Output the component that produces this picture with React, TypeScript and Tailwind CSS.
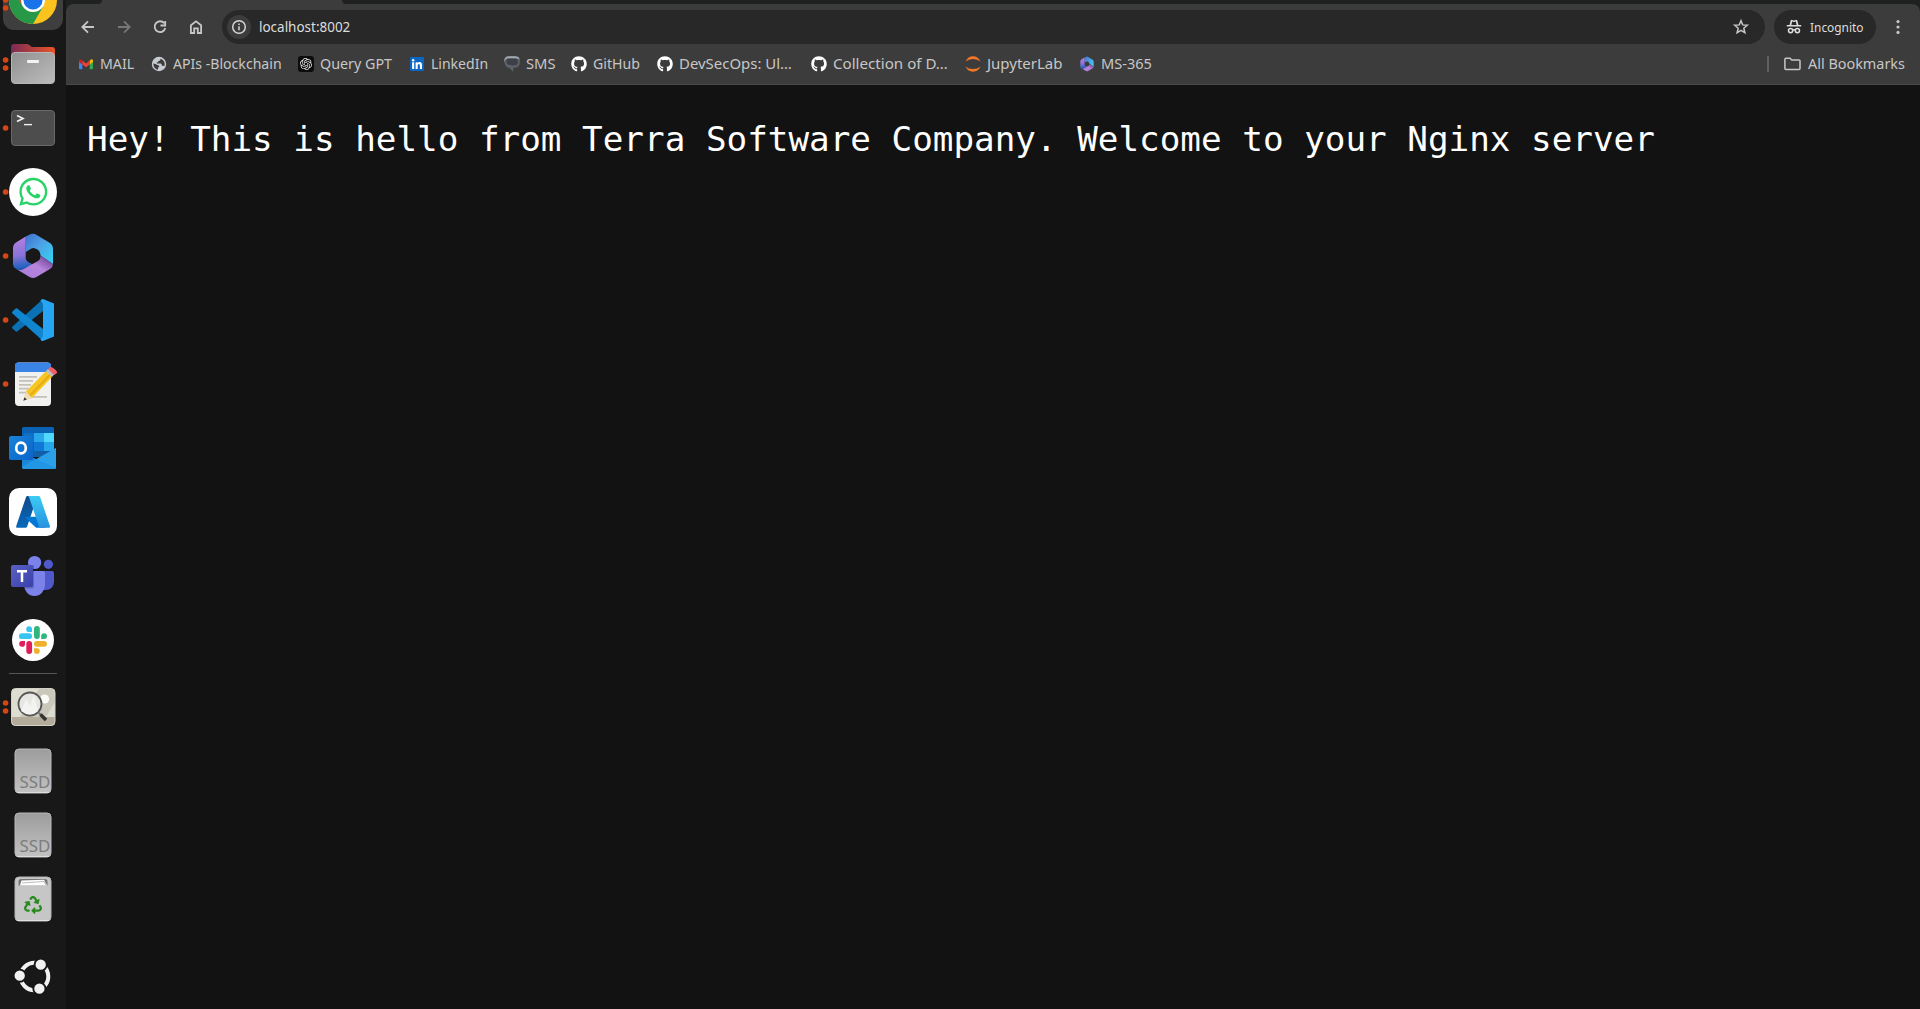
import React, { useLayoutEffect, useRef, useState } from 'react';
import { FaWhatsapp, FaGithub, FaRecycle } from 'react-icons/fa';
import { SiOpenai } from 'react-icons/si';

type Kids = { children: React.ReactNode };

function DockItem({ children, dots = 0 }: Kids & { dots?: number }) {
  const ys = dots === 3 ? [24, 32, 40] : dots === 2 ? [28, 36] : dots === 1 ? [32] : [];
  return (
    <div className="h-16 w-[66px] shrink-0">
      <svg width="66" height="64" viewBox="0 0 66 64">
        {children}
        {ys.map((y) => (
          <circle key={y} cx="5.6" cy={y} r="2.8" fill="#d64613" />
        ))}
      </svg>
    </div>
  );
}

function M365() {
  return (
    <g>
      <path d="M25.700 12.500 L31 10 Q33 9.300 35 10 L50 19 Q53 21 53 25 V40 L40.500 31.500 Q40.300 27 37 25.300 L34.500 24.200 Q33 23.800 31 24.700 L25.700 28Z" fill="url(#mb)" />
      <path d="M25.700 12.500 L16 18.500 Q13 20.500 13 24 V40 Q13 43 15.500 44.500 Q18.500 46.500 22 45.500 L33 40.500 L28 38 Q25.700 36.500 25.700 34Z" fill="url(#mp)" />
      <path d="M15.500 44.500 Q19 47 23 45.200 L38 37 Q40.500 35.500 40.500 31.500 L53 40 Q53 43 50 45 L36 53.300 Q33 54.600 30 53.300Z" fill="url(#mv)" />
    </g>
  );
}

function Defs() {
  return (
    <svg width="0" height="0" className="absolute">
      <defs>
        <linearGradient id="mb" x1="0" y1="0" x2="1" y2="1"><stop offset="0" stopColor="#3f6fd0" /><stop offset=".45" stopColor="#4ca2e4" /><stop offset="1" stopColor="#35d6f5" /></linearGradient>
        <linearGradient id="mp" x1="0" y1="0" x2=".1" y2="1"><stop offset="0" stopColor="#b782e2" /><stop offset=".6" stopColor="#8a72d8" /><stop offset="1" stopColor="#1461bd" /></linearGradient>
        <linearGradient id="mv" x1="0" y1="1" x2="1" y2="0"><stop offset="0" stopColor="#a87be0" /><stop offset=".55" stopColor="#b684dc" /><stop offset="1" stopColor="#57307f" /></linearGradient>
        <linearGradient id="gray" x1="0" y1="0" x2="0" y2="1"><stop offset="0" stopColor="#9c9c9c" /><stop offset="1" stopColor="#c2c2c2" /></linearGradient>
        <linearGradient id="folderFront" x1="0" y1="0" x2="1" y2="1"><stop offset="0" stopColor="#909090" /><stop offset="1" stopColor="#bdbdbd" /></linearGradient>
        <linearGradient id="folderBack" x1="0" y1="0" x2="1" y2="0"><stop offset="0" stopColor="#7b2a55" /><stop offset="1" stopColor="#ea5526" /></linearGradient>
        <linearGradient id="az1" x1="0" y1="0" x2="0" y2="1"><stop offset="0" stopColor="#114a8b" /><stop offset="1" stopColor="#0669bc" /></linearGradient>
        <linearGradient id="az2" x1="0" y1="0" x2="0" y2="1"><stop offset="0" stopColor="#3ccbf4" /><stop offset="1" stopColor="#2892df" /></linearGradient>
        <linearGradient id="teams" x1="0" y1="0" x2="1" y2="1"><stop offset="0" stopColor="#5a62c3" /><stop offset="1" stopColor="#3940ab" /></linearGradient>
        <linearGradient id="outlook" x1="0" y1="0" x2="1" y2="1"><stop offset="0" stopColor="#1784d9" /><stop offset="1" stopColor="#0a63c9" /></linearGradient>
      </defs>
    </svg>
  );
}

function Ssd() {
  return (
    <DockItem>
      <rect x="15" y="10" width="36" height="44" rx="4" fill="url(#gray)" stroke="#b9b9b9" />
      <path d="M17 53.500H49" stroke="#dcdcdc" />
      <text x="19.500" y="49" fontSize="16.500" textLength="31" lengthAdjust="spacingAndGlyphs" fill="#7d7d7d" className="font-['Noto_Sans',sans-serif]">SSD</text>
    </DockItem>
  );
}

function Dock() {
  return (
    <aside className="flex h-full w-[66px] shrink-0 flex-col overflow-hidden bg-[#181818]">
      <div className="-mt-8 flex flex-col">
        <DockItem dots={3}>
          <rect x="3" y="2" width="60" height="60" rx="11" fill="#3e3e3e" />
          <circle cx="33" cy="32" r="24" fill="#fcc31e" />
          <path d="M12.200 20 L22.600 38 L33 44 L43.400 38 L33 56 A24 24 0 0 1 12.200 20Z" fill="#279847" />
          <path d="M12.200 20 A24 24 0 0 1 53.800 20 H33 L22.600 38Z" fill="#e33b2e" />
          <circle cx="33" cy="32" r="12" fill="#fff" />
          <circle cx="33" cy="32" r="9.600" fill="#1a73e8" />
        </DockItem>
        <DockItem dots={2}>
          <path d="M11 15 Q11 12 14 12 H27 Q29 12 30 13.500 Q31 15 33 15 H52 Q55 15 55 18 V30 H11Z" fill="url(#folderBack)" />
          <rect x="11.500" y="20.500" width="43" height="31" rx="3.500" fill="url(#folderFront)" stroke="#b5b5b5" />
          <rect x="27" y="28" width="12" height="3" rx="1" fill="#f2f2f2" />
        </DockItem>
        <DockItem dots={1}>
          <rect x="11.500" y="14.500" width="43" height="35" rx="3.500" fill="#4d4d4d" stroke="#686868" />
          <path d="M17 19.500 L23 22.500 L17 25.500" fill="none" stroke="#f0f0f0" strokeWidth="1.700" />
          <path d="M24 28.600H32" stroke="#f0f0f0" strokeWidth="1.400" />
        </DockItem>
        <DockItem dots={1}>
          <circle cx="33" cy="32" r="24" fill="#fff" />
          <FaWhatsapp x="17.300" y="15.800" size={32} color="#25d366" />
        </DockItem>
        <DockItem dots={1}><M365 /></DockItem>
        <DockItem dots={1}>
          <path d="M43 11 L12.500 38.500 Q11.500 39.500 12.500 40.500 L15.500 43.300 Q16.500 44 17.500 43.300 L43 23Z" fill="#0a71b5" />
          <path d="M43 53 L12.500 25.500 Q11.500 24.500 12.500 23.500 L15.500 20.700 Q16.500 20 17.500 20.700 L43 41Z" fill="#1086d1" />
          <path d="M43 11 L54 15.500 V48.500 L43 53 Q41 53 40.500 51.500 L43 48 V16 L40.500 12.500 Q41 11 43 11Z" fill="#27a5f2" />
        </DockItem>
        <DockItem dots={1}>
          <rect x="15" y="10.500" width="36" height="43.500" rx="4" fill="#f1f1ef" />
          <path d="M15 20 V13.500 Q15 10.500 18 10.500 H48 Q51 10.500 51 13.500 V20Z" fill="#3a84e6" />
          <g stroke="#c4c0ba" strokeWidth="1.800">
            <path d="M19 24.900H37M19 28.800H33M19 32.800H31M19 36.600H29M19 40.600H27M29 44.900H47" />
          </g>
          <path d="M24 48 L26 39.500 L46 19 L52 25 L32 46Z" fill="#f6c623" />
          <path d="M30 43.500 L50 22.800" stroke="#e8ac14" strokeWidth="2" />
          <path d="M23.500 48.500 L26 39.500 L32 46Z" fill="#efdcb8" />
          <path d="M23.300 48.700 L24.400 45.300 L26.800 47.400Z" fill="#333" />
          <path d="M46 19 L48.300 16.800 L54.200 22.600 L52 25Z" fill="#b9bcc2" />
          <path d="M48 17 L50 15.300 Q51.500 14.500 54.500 17 Q57.800 19.800 57 21 L54.200 23Z" fill="#ef5f68" />
        </DockItem>
        <DockItem>
          <rect x="22" y="11" width="32" height="30" rx="1.500" fill="#0a62b4" />
          <rect x="24" y="17" width="10" height="9" fill="#0f6fc5" />
          <rect x="34" y="17" width="10" height="9" fill="#28a8ea" />
          <rect x="44" y="17" width="10" height="9" fill="#50d9ff" />
          <rect x="34" y="26" width="10" height="9" fill="#0f78d4" />
          <rect x="44" y="26" width="10" height="9" fill="#28a8ea" />
          <rect x="34" y="35" width="20" height="6" fill="#115ea9" />
          <path d="M22 36 L38 44 L56 32 V51 Q56 53 54 53 H24 Q22 53 22 51Z" fill="#1c86d6" />
          <path d="M56 32 L22 51 Q22.500 53 24 53 H54 Q56 53 56 51Z" fill="#2ba0e8" />
          <path d="M36 43 L56 52 Q55.500 53 54 53 H24 L22 51Z" fill="#2096e4" />
          <rect x="9" y="20" width="24" height="24" rx="2" fill="url(#outlook)" />
          <ellipse cx="21" cy="32" rx="4.800" ry="5.400" fill="none" stroke="#fff" strokeWidth="2.700" />
        </DockItem>
        <DockItem>
          <rect x="9" y="8" width="48" height="48" rx="10" fill="#fff" />
          <g transform="translate(14.7 13.6) scale(.383)">
            <path d="M33.338 6.544h26.038l-27.030 80.087a4.152 4.152 0 0 1-3.933 2.824H8.149a4.145 4.145 0 0 1-3.928-5.470L29.404 9.368a4.152 4.152 0 0 1 3.934-2.825z" fill="url(#az1)" />
            <path d="M71.175 60.261h-41.290a1.911 1.911 0 0 0-1.305 3.309l26.532 24.764a4.171 4.171 0 0 0 2.846 1.121h23.380z" fill="#0078d4" />
            <path d="M66.595 9.364a4.145 4.145 0 0 0-3.928-2.820H33.648a4.146 4.146 0 0 1 3.928 2.820l25.184 74.620a4.146 4.146 0 0 1-3.928 5.472h29.020a4.146 4.146 0 0 0 3.927-5.472z" fill="url(#az2)" />
          </g>
        </DockItem>
        <DockItem>
          <circle cx="34.600" cy="18.500" r="6.600" fill="#7b83eb" />
          <circle cx="48.400" cy="20.300" r="4.600" fill="#5059c9" />
          <path d="M42 27 H52 Q54 27 54 29 V38 A8 8 0 0 1 46 46 H42Z" fill="#5059c9" />
          <path d="M24 27 H43 Q45 27 45 29 V41 A10.500 10.900 0 0 1 24 41Z" fill="#7b83eb" />
          <path d="M26 21H34V42.500Q34 44.500 32 44.500H24V43Z" fill="#000" opacity=".2" />
          <rect x="11" y="21" width="22" height="22" rx="2" fill="url(#teams)" />
          <path d="M17 27.300H27M22 26.500V38" stroke="#fff" strokeWidth="2.500" />
        </DockItem>
        <DockItem>
          <circle cx="33" cy="32" r="21" fill="#fff" />
          <g fill="#36c5f0"><rect x="19" y="25.300" width="13" height="5.800" rx="2.900" /><path d="M32 24V20.900A2.900 2.900 0 1 0 29.100 24Z" /></g>
          <g fill="#2eb67d"><rect x="34" y="18" width="5.800" height="13" rx="2.900" /><path d="M41.200 31H44.100A2.900 2.900 0 1 0 41.200 28.100Z" /></g>
          <g fill="#ecb22e"><rect x="34" y="32.900" width="13" height="5.800" rx="2.900" /><path d="M34 40.200V43.100A2.900 2.900 0 1 0 36.900 40.200Z" /></g>
          <g fill="#e01e5a"><rect x="26.300" y="33" width="5.800" height="13" rx="2.900" /><path d="M25 33H21.900A2.900 2.900 0 1 0 25 35.900Z" /></g>
        </DockItem>
      </div>
      <div className="mx-auto mt-px mb-px h-px w-12 shrink-0 bg-[#555555]" />
      <DockItem dots={2}>
        <rect x="11.500" y="13.500" width="43.500" height="37" rx="4" fill="#deddd2" />
        <path d="M39 14 H52 Q55 14 55 17 V42 H20Z" fill="#c9c8ba" />
        <path d="M46 42 L55 27 V42Z" fill="#dcdccf" />
        <path d="M11.500 42 H55 V47 Q55 50.500 52 50.500 H14.500 Q11.500 50.500 11.500 47Z" fill="#b3ac9b" />
        <rect x="11.500" y="13.500" width="43.500" height="37" rx="4" fill="none" stroke="#d3d1c7" />
        <circle cx="44.600" cy="24" r="4.600" fill="#fafaf7" />
        <circle cx="30" cy="29" r="11.500" fill="#e6e6e2" stroke="#555" strokeWidth="1.800" />
        <path d="M21 36 L26 24 L30 31 L34 20 L38 36 Q30 43 21 36Z" fill="#f3f3f1" />
        <path d="M38 37L41 40" stroke="#777" strokeWidth="2" />
        <path d="M40.500 39.500L46 45" stroke="#333" strokeWidth="3.600" />
      </DockItem>
      <Ssd />
      <Ssd />
      <DockItem>
        <rect x="15" y="10" width="36" height="44" rx="4" fill="#c6c6c6" stroke="#b5b5b5" />
        <path d="M17 53.500H49" stroke="#e2e2e2" />
        <path d="M18.500 18.500 V14 Q18.500 12 21 12 H45 Q47.500 12 47.500 14 V18.500Z" fill="#777" />
        <path d="M20 18.500 L21.500 13.500 L44 12.800 L47 18.500Z" fill="#fff" />
        <path d="M22 16 L44 14.500 L46 18" fill="none" stroke="#aaa" strokeWidth=".8" />
        <FaRecycle x="24" y="29" size={18} color="#28891f" />
      </DockItem>
      <div className="mt-[13px]">
        <DockItem>
          <circle cx="34.500" cy="32.500" r="13.800" fill="none" stroke="#f2f2f2" strokeWidth="4" />
          {[[40.7, 20.7], [19.7, 31.7], [39.4, 44.7]].map(([x, y]) => (
            <circle key={x} cx={x} cy={y} r="6.100" fill="#f2f2f2" stroke="#181818" strokeWidth="1.900" />
          ))}
        </DockItem>
      </div>
    </aside>
  );
}

const github = <FaGithub size={16} color="#fff" />;

const bookmarks = [
  { t: 'MAIL', w: 'w-[73px]', l: 34, icon: (
    <svg width="16" height="16" viewBox="0 0 16 16"><path d="M1 4.500V12.500Q1 13.300 2 13.300H4.300V7Z" fill="#4285f4" /><path d="M15 4.500V12.500Q15 13.300 14 13.300H11.700V7Z" fill="#34a853" /><path d="M11.700 4.600L13 3.500Q15 2.500 15 4.700V6L11.700 8.500Z" fill="#fbbc04" /><path d="M4.300 4.600L3 3.500Q1 2.500 1 4.700V6L4.300 8.500Z" fill="#c5221f" /><path d="M4.300 4.600L8 7.400L11.700 4.600V8.500L8 11.300L4.300 8.500Z" fill="#ea4335" /></svg>
  ) },
  { t: 'APIs -Blockchain', w: 'w-[147px]', l: 109, icon: (
    <svg width="16" height="16" viewBox="0 0 16 16"><circle cx="8" cy="8" r="7.200" fill="#c8cbd0" /><path d="M2.300 7.500Q5 7.600 6.200 9Q8.500 9 8.300 11L7 11.500V13.700Q2.500 13 2.300 7.500ZM9.500 2.400V3.800Q9 5 7.300 5V6.300H5.800V7.600H9.800Q11 8 10.800 9.800H12.500L13.400 10.300Q15 5 9.500 2.400Z" fill="#3c3c3c" /></svg>
  ) },
  { t: 'Query GPT', w: 'w-[111px]', l: 72.5, icon: (
    <span className="flex size-4 items-center justify-center rounded-[3px] bg-[#0c0c0c]"><SiOpenai size={12} color="#e6e6e6" /></span>
  ) },
  { t: 'LinkedIn', w: 'w-[95px]', l: 57, icon: (
    <svg width="16" height="16" viewBox="0 0 16 16"><rect x="1" y="1" width="14" height="14" rx="1" fill="#0a66c2" /><path d="M3.100 6.200H5.200V12.900H3.100ZM6.600 6.200H8.600V7.100Q9.200 6 10.600 6Q13 6 13 9V12.900H10.900V9.400Q10.900 7.900 9.800 7.900Q8.700 7.900 8.700 9.400V12.900H6.600Z" fill="#fff" /><circle cx="4.150" cy="4.200" r="1.250" fill="#fff" /></svg>
  ) },
  { t: 'SMS', w: 'w-[67px]', l: 29.5, icon: (
    <svg width="16" height="16" viewBox="0 0 16 16"><path d="M.2 5Q0 .3 5 .3H11Q15.900 .3 15.800 4V7Q15.500 11.500 9.500 11.800L9 15.800L5.500 12Q1 11.500 .2 5Z" fill="#5d6168" /><path d="M.2 6Q0 .3 5 .3H11Q15 .3 15.600 3.500Q14 2 11 2H5Q1.500 2 .2 6Z" fill="#a3a9b3" /><path d="M2.500 4.500Q2.800 3 5 3H11Q14 3 14 6Q14 9.500 9 9.500Q2 9.500 2.500 4.500Z" fill="#3c4046" /></svg>
  ) },
  { t: 'GitHub', w: 'w-[86px]', l: 47, icon: github },
  { t: 'DevSecOps: Ul…', w: 'w-[154px]', l: 112.5, icon: github },
  { t: 'Collection of D…', w: 'w-[154px]', l: 115, icon: github },
  { t: 'JupyterLab', w: 'w-[114px]', l: 76, icon: (
    <svg width="16" height="16" viewBox="0 0 16 16" fill="#f37726"><path d="M.5 5.500Q3 .3 8 .3T15.500 5.500Q12.500 3 8 3T.5 5.500Z" /><path d="M.5 10.500Q3 15.700 8 15.700T15.500 10.500Q12.500 13 8 13T.5 10.500Z" /></svg>
  ) },
  { t: 'MS-365', w: 'w-[90px]', l: 50.5, icon: <svg width="16" height="16" viewBox="9 8 48 48"><M365 /></svg> },
];

/* Condenses its text so that it spans exactly the given width. */
function Label({ text, width, className = 'text-[15px] text-[#c7c7c7]' }: { text: string; width: number; className?: string }) {
  const ref = useRef<HTMLSpanElement>(null);
  const [scale, setScale] = useState(1);
  useLayoutEffect(() => {
    if (ref.current) setScale(width / ref.current.offsetWidth);
  }, [width, text]);
  return (
    <span className="flex h-[22px] shrink-0 items-start" style={{ width }}>
      <span
        ref={ref}
        className={"shrink-0 origin-left font-['Noto_Sans',sans-serif] leading-5 whitespace-nowrap " + className}
        style={{ transform: `scaleX(${scale})` }}
      >
        {text}
      </span>
    </span>
  );
}

function NavIcon({ d, dim = false }: { d: string; dim?: boolean }) {
  return (
    <span className="flex w-9 items-center justify-center">
      <svg width="18" height="18" viewBox="0 0 18 18" fill="none" stroke={dim ? '#777777' : '#c7c7c7'} strokeWidth="1.800"><path d={d} /></svg>
    </span>
  );
}

export default function App() {
  return (
    <div className="flex h-[1009px] w-[1920px] overflow-hidden bg-[#121212]">
      <Defs />
      <Dock />
      <div className="flex min-w-0 flex-1 flex-col">
        <div className="bg-[#1f2120]">
          <div className="flex h-1 bg-[#3c3c3c]">
            <div className="w-9 rounded-br-[6px] bg-[#1f2120]" />
            <div className="w-[240px]" />
            <div className="flex-1 rounded-bl-[6px] bg-[#1f2120]" />
          </div>
          <div className="h-[81px] rounded-t-lg border-b border-[#4a4a4a] bg-[#3c3c3c]">
            <div className="flex h-[46px] items-center pl-1">
              <NavIcon d="M15 9H3.500M9 3.300L3.300 9L9 14.700" />
              <NavIcon dim d="M3 9H14.500M9 3.300L14.700 9L9 14.700" />
              <NavIcon d="M13.200 5.200A5.400 5.400 0 1 0 14.300 10M14.200 3V7.500H9.500" />
              <NavIcon d="M3.900 7.300L9 3.400L14.100 7.300V15H10.800V10.300H7.200V15H3.900Z" />
              <div className="ml-2 flex h-[34px] w-[1543px] items-center rounded-full bg-[#282828] pr-[15px] pl-[5px]">
                <span className="flex size-6 items-center justify-center rounded-full bg-[#3c3c3c]">
                  <svg width="16" height="16" viewBox="0 0 16 16" fill="none" stroke="#d6d6d6" strokeWidth="1.500"><circle cx="8" cy="8" r="6.300" /><path d="M8 7.200V11.300M8 4.500V6" /></svg>
                </span>
                <span className="ml-2 flex"><Label text="localhost:8002" width={91} className="text-[14.500px] text-[#dddddd]" /></span>
                <svg className="ml-auto" width="18" height="18" viewBox="0 0 18 18" fill="none" stroke="#c7c7c7" strokeWidth="1.500"><path d="M9 2.700L10.700 6.900L15.300 7.200L11.800 10.200L12.900 14.700L9 12.300L5.100 14.700L6.200 10.200L2.700 7.200L7.300 6.900Z" /></svg>
              </div>
              <div className="ml-[9px] flex h-[34px] w-[102px] items-center rounded-full bg-[#282828] pl-3">
                <svg width="16" height="16" viewBox="0 0 16 16" fill="#dddddd"><path d="M4.700 1.400Q5 .7 5.800 .9L8 1.400L10.200 .9Q11 .7 11.300 1.400L12.500 6H15.200V7.600H.8V6H3.500Z" /><path d="M6.200 2.600L5.300 6H10.700L9.800 2.600L8 3Z" fill="#282828" /><g fill="none" stroke="#dddddd" strokeWidth="1.500"><circle cx="4.600" cy="11.600" r="2.100" /><circle cx="11.400" cy="11.600" r="2.100" /><path d="M6.600 11.200Q8 10.400 9.400 11.200" /></g></svg>
                <span className="ml-2 flex pt-px"><Label text="Incognito" width={54} className="text-[13px] text-[#dddddd]" /></span>
              </div>
              <svg className="ml-[14px]" width="16" height="18" viewBox="0 0 16 18" fill="#c7c7c7"><circle cx="8" cy="3.600" r="1.600" /><circle cx="8" cy="9" r="1.600" /><circle cx="8" cy="14.400" r="1.600" /></svg>
            </div>
            <div className="flex h-7 items-center pl-3">
              {bookmarks.map((b) => (
                <div key={b.t} className={'flex shrink-0 items-center gap-1.5 ' + b.w}>
                  {b.icon}
                  <Label text={b.t} width={b.l} />
                </div>
              ))}
              <div className="ml-auto flex items-center pr-[15px]">
                <span className="mr-[15px] h-4 w-[2px] bg-[#5f5f5f]" />
                <svg className="mr-[7px]" width="17" height="16" viewBox="0 0 17 16" fill="none" stroke="#c7c7c7" strokeWidth="1.500"><path d="M.9 3.200Q.9 2.200 1.900 2.200H6L7.800 4H15Q16 4 16 5V12.600Q16 13.600 15 13.600H1.900Q.9 13.600 .9 12.600Z" /></svg>
                <Label text="All Bookmarks" width={97} />
              </div>
            </div>
          </div>
        </div>
        <main className="flex-1 bg-[#121212] pt-[34px] pl-[21px]">
          <pre className="font-['DejaVu_Sans_Mono',monospace] text-[34.280px] leading-10 text-white">Hey! This is hello from Terra Software Company. Welcome to your Nginx server</pre>
        </main>
      </div>
    </div>
  );
}
